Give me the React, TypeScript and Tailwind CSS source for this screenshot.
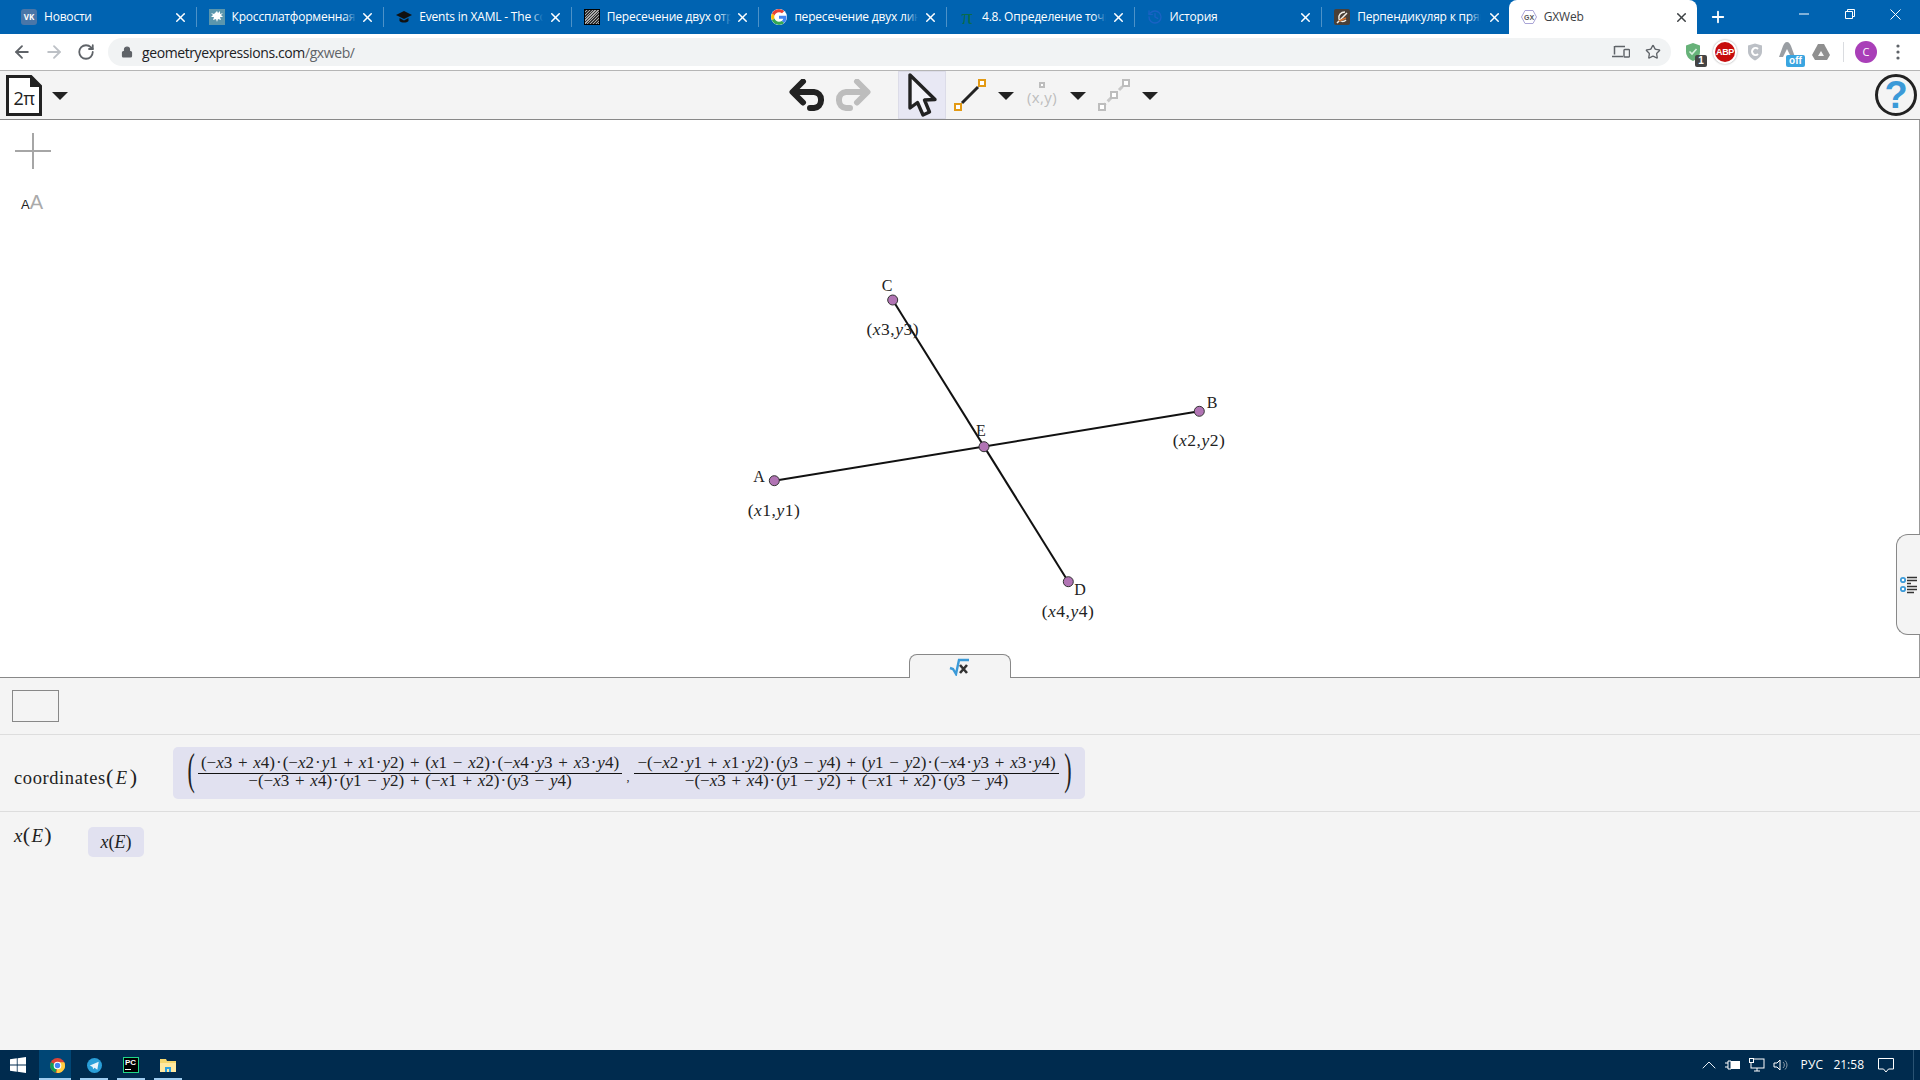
import React from 'react';
import { ArrowLeft, ArrowRight, RotateCw, Lock, Star, X, Plus, History, ChevronUp } from 'lucide-react';

const serif = "font-['Liberation_Serif',serif]";

const Expr: React.FC<{ s: string }> = ({ s }) => (
  <>
    {s.split(/([xyE·])/).map((part, i) => {
      if (part === '·') return <span key={i} className="mx-[1px]">·</span>;
      return /^[xyE]$/.test(part) ? <i key={i}>{part}</i> : <span key={i}>{part}</span>;
    })}
  </>
);

const Caret: React.FC<{ className?: string }> = ({ className }) => (
  <svg width="16" height="8" viewBox="0 0 16 8" className={`shrink-0 mt-[2px] ${className ?? ''}`}>
    <polygon points="0,0 16,0 8,8" fill="#222" />
  </svg>
);

const VkIcon = () => (
  <span className="w-4 h-4 rounded-[3px] bg-[#4a76a8] text-white text-[8px] font-bold flex items-center justify-center leading-none">
    VK
  </span>
);

const SplatIcon = () => (
  <svg width="16" height="16" viewBox="0 0 16 16">
    <rect width="16" height="16" fill="#5b96ad" />
    <path d="M8 2l1 2 2-2 0 3 3-1-2 2 2 2-3 0 1 3-3-1-1 3-1-3-3 1 1-3-3 0 2-2-2-2 3 1z" fill="#fff" />
  </svg>
);

const CapIcon = () => (
  <svg width="16" height="16" viewBox="0 0 16 16">
    <polygon points="0,6 8,2 16,6 8,10" fill="#111" />
    <path d="M3.5 9v3c2 2 7 2 9 0V9L8 11.5z" fill="#111" />
  </svg>
);

const HatchIcon = () => (
  <span className="w-4 h-4 border border-black bg-[repeating-linear-gradient(135deg,#333_0px,#333_1px,#aaa_1px,#aaa_2px)]" />
);

const GoogleIcon = () => (
  <svg width="16" height="16" viewBox="0 0 48 48" className="bg-white rounded-full">
    <path fill="#EA4335" d="M24 9.5c3.5 0 6.6 1.2 9.1 3.6l6.8-6.8C35.8 2.5 30.3 0 24 0 14.6 0 6.5 5.4 2.6 13.2l7.9 6.2C12.4 13.7 17.7 9.5 24 9.5z" />
    <path fill="#4285F4" d="M46.5 24.5c0-1.6-.1-3.100-.4-4.500H24v9h12.700c-.5 2.900-2.200 5.400-4.700 7l7.600 5.900c4.400-4.100 6.900-10.100 6.900-17.400z" />
    <path fill="#FBBC05" d="M10.500 28.600c-.5-1.400-.8-3-.8-4.600s.3-3.200.8-4.600l-7.900-6.200C.9 16.500 0 20.100 0 24s.9 7.500 2.600 10.800z" />
    <path fill="#34A853" d="M24 48c6.500 0 11.900-2.100 15.900-5.800L32.300 36.300c-2.100 1.400-4.900 2.300-8.300 2.300-6.300 0-11.600-4.200-13.500-9.900l-7.900 6.100C6.500 42.600 14.600 48 24 48z" />
  </svg>
);

const PiIcon = () => <span className={`${serif} text-[#0a6b4c] text-[22px] leading-4`}>π</span>;

const PerpIcon = () => (
  <svg width="16" height="16" viewBox="0 0 16 16">
    <rect width="16" height="16" rx="2" fill="#4a4038" />
    <path d="M11 3C7 3 4 6 5 10c1 3 5 3 7 1M3 14L13 4" stroke="#f3f0e8" strokeWidth="1.5" fill="none" />
    <path d="M5 12l7-3" stroke="#d9722a" strokeWidth="1.500" />
  </svg>
);

const GxIcon = () => (
  <svg width="16" height="16" viewBox="0 0 16 16">
    <polygon points="4,1.500 12,1.500 15.500,8 12,14.500 4,14.500 0.500,8" fill="none" stroke="#a9a4d6" strokeWidth="1" />
    <text x="8" y="10.500" textAnchor="middle" fontSize="7" fontWeight="700" fill="#555" fontFamily="Liberation Sans">GX</text>
  </svg>
);

const tabs: { title: string; icon: React.ReactNode }[] = [
  { title: 'Новости', icon: <VkIcon /> },
  { title: 'Кроссплатформенная разработка', icon: <SplatIcon /> },
  { title: 'Events in XAML - The complete', icon: <CapIcon /> },
  { title: 'Пересечение двух отрезков', icon: <HatchIcon /> },
  { title: 'пересечение двух линий', icon: <GoogleIcon /> },
  { title: '4.8. Определение точки', icon: <PiIcon /> },
  { title: 'История', icon: <History size={16} color="#1a62c4" strokeWidth={2} /> },
  { title: 'Перпендикуляр к прямой', icon: <PerpIcon /> },
];

const TabBar = () => (
  <div className="h-[34px] shrink-0 bg-[#0063b1] flex items-end pl-[9px] font-['Open_Sans','Noto_Sans',sans-serif] text-[12px]">
    {tabs.map((tab, i) => (
      <div
        key={tab.title}
        className={`relative w-[187.6px] h-[34px] shrink-0 flex items-center pl-3 pr-[8px] ${
          i < 7 ? 'border-r border-[#4d92c8]/70 [border-image:linear-gradient(transparent_8px,#4d92c8_8px,#4d92c8_26px,transparent_26px)_1]' : ''
        }`}
      >
        <span className="w-4 h-4 flex items-center justify-center shrink-0">{tab.icon}</span>
        <span className="relative ml-[7px] w-[124px] overflow-hidden whitespace-nowrap text-white tracking-[-0.2px]">
          {tab.title}
          <span className="absolute right-0 top-0 bottom-0 w-3 bg-gradient-to-r from-transparent to-[#0063b1]" />
        </span>
        <X size={15} color="#fff" strokeWidth={2.4} className="ml-auto" />
      </div>
    ))}
    <div className="w-[188px] h-[34px] shrink-0 bg-white rounded-t-lg flex items-center pl-3 pr-[8px] -ml-[1px]">
      <GxIcon />
      <span className="ml-[7px] text-[#3c4043] tracking-[-0.2px]">GXWeb</span>
      <X size={15} color="#3c4043" strokeWidth={2.4} className="ml-auto" />
    </div>
    <Plus size={18} color="#fff" strokeWidth={2.4} className="ml-[12px] mb-2" />
    <div className="ml-auto flex items-center h-[28px] self-start text-white">
      <svg width="10" height="10" viewBox="0 0 10 10" className="mr-[36px]">
        <path d="M0 5h10" stroke="#fff" strokeWidth="1" />
      </svg>
      <svg width="10" height="10" viewBox="0 0 10 10" className="mr-[35px]">
        <path d="M.5 2.500h7v7h-7zM2.500 2.500v-2h7v7h-2" stroke="#fff" strokeWidth="1" fill="none" />
      </svg>
      <svg width="11" height="11" viewBox="0 0 11 11" className="mr-[19px]">
        <path d="M.5.500l10 10M10.500.500l-10 10" stroke="#fff" strokeWidth="1" />
      </svg>
    </div>
  </div>
);

const NavBar = () => (
  <div className="h-[36px] shrink-0 bg-white flex items-center pl-3">
    <ArrowLeft size={20} color="#5f6368" strokeWidth={2.2} />
    <ArrowRight size={20} color="#bdc1c6" strokeWidth={2.2} className="ml-3" />
    <RotateCw size={18} color="#5f6368" strokeWidth={2.4} className="ml-[13px]" />
    <div className="ml-[13px] w-[1563px] h-[28px] rounded-full bg-[#f1f3f4] flex items-center pl-[13px]">
      <Lock size={12} color="#5f6368" fill="#5f6368" strokeWidth={2.4} />
      <span className="ml-[9px] text-[14px] font-['Open_Sans','Noto_Sans',sans-serif] tracking-[-0.4px] text-[#202124]">
        geometryexpressions.com<span className="text-[#5f6368]">/gxweb/</span>
      </span>
      <svg width="18" height="14" viewBox="0 0 18 14" className="ml-auto mr-[15px]">
        <path d="M3 1.500h10M2.500 1v8.500M0 11.500h11" stroke="#5f6368" strokeWidth="1.500" fill="none" />
        <rect x="12" y="4.500" width="5.500" height="7.500" rx=".8" stroke="#5f6368" strokeWidth="1.400" fill="none" />
      </svg>
      <Star size={16} color="#5f6368" strokeWidth={2} className="mr-[10px]" />
    </div>
    <div className="relative ml-[10px] w-6 h-6 flex items-center justify-center">
      <svg width="18" height="20" viewBox="0 0 18 20">
        <path d="M9 1l7 2.500v6c0 4.500-3 8-7 9.500-4-1.500-7-5-7-9.500v-6z" fill="#67b279" />
        <path d="M5.500 9.500l2.500 2.500 4.500-5" stroke="#d9f0df" strokeWidth="1.600" fill="none" />
      </svg>
      <span className="absolute right-[-2px] bottom-[-3px] w-[12px] h-[12px] bg-[#444] rounded-[2px] text-white text-[10px] font-bold font-['Liberation_Sans',sans-serif] flex items-center justify-center leading-none">
        1
      </span>
    </div>
    <div className="ml-[8px] w-6 h-6 rounded-full bg-white shadow-[0_0_2px_#999] flex items-center justify-center">
      <span className="w-[20px] h-[20px] rounded-full bg-[#c70d0d] text-white text-[9px] tracking-[-0.4px] font-bold font-['Liberation_Sans',sans-serif] flex items-center justify-center leading-none">
        ABP
      </span>
    </div>
    <svg width="20" height="20" viewBox="0 0 20 20" className="ml-[8px]">
      <path d="M10 1.500l7 2v6c0 4-3 7-7 9-4-2-7-5-7-9v-6z" fill="#bcc0c6" />
      <path d="M13 7a3.500 3.500 0 1 0 0 5" stroke="#fff" strokeWidth="2" fill="none" />
    </svg>
    <div className="relative ml-[13px] w-6 h-6 flex items-center justify-center">
      <svg width="18" height="20" viewBox="0 0 18 20" className="-translate-x-[3px] -translate-y-[1px]">
        <path d="M9 1C7 1 6 3 5 5L1 16h4L9 8l4 8h4L13 5c-1-2-2-4-4-4z" fill="#9a9ea3" />
      </svg>
      <span className="absolute right-[-3px] bottom-[-3px] w-[19px] justify-center h-[12px] bg-[#3aa5e0] rounded-[2px] text-white text-[10px] font-bold font-['Liberation_Sans',sans-serif] flex items-center leading-none">
        off
      </span>
    </div>
    <svg width="20" height="18" viewBox="0 0 20 18" className="ml-[9px]">
      <polygon points="7,1 13,1 19,12 16,17 4,17 1,12" fill="#8f8f8f" />
      <polygon points="10,8 13,13 7,13" fill="#f5f5f5" />
    </svg>
    <div className="ml-[12px] w-px h-[20px] bg-[#dadce0]" />
    <span className="ml-[11px] w-[22px] h-[22px] rounded-full bg-[#a93fb8] text-white text-[11px] font-['Open_Sans',sans-serif] flex items-center justify-center">
      C
    </span>
    <svg width="6" height="16" viewBox="0 0 6 16" className="ml-[18px]">
      <circle cx="3" cy="2" r="1.600" fill="#5f6368" />
      <circle cx="3" cy="8" r="1.600" fill="#5f6368" />
      <circle cx="3" cy="14" r="1.600" fill="#5f6368" />
    </svg>
  </div>
);

const Toolbar = () => (
  <div className="h-[50px] shrink-0 bg-[#f4f4f4] border-t border-t-[#b5b5b5] border-b border-b-[#888] flex items-center pl-[6px]">
    <div className="relative w-[36px] h-[41px] shrink-0">
      <svg width="36" height="41" viewBox="0 0 36 41" className="absolute inset-0">
        <path d="M1.500 1.500H25L34.500 11V39.500H1.500z" fill="#fff" stroke="#222" strokeWidth="3" />
        <path d="M24 1.500V12H34.500z" fill="#222" />
      </svg>
      <span className="relative flex justify-center pt-[11px] text-[18px] leading-6 text-[#222] font-['Open_Sans',sans-serif] tracking-[-0.5px]">2π</span>
    </div>
    <Caret className="ml-[10px]" />
    <svg width="35" height="32" viewBox="0 0 35 32" className="ml-[721px] shrink-0 -mt-[1px]">
      <path d="M14 2.500L3.500 13 14 23.500M4 13H25A7.500 7.500 0 0 1 32 20.500V21.500A7.500 7.500 0 0 1 25 29H21" fill="none" stroke="#222" strokeWidth="6" strokeLinecap="round" strokeLinejoin="round" />
    </svg>
    <svg width="35" height="32" viewBox="0 0 35 32" className="ml-[12px] shrink-0 -mt-[1px]">
      <path d="M21 2.500L31.500 13 21 23.500M31 13H10A7.500 7.500 0 0 0 3 20.500V21.500A7.500 7.500 0 0 0 10 29H14" fill="none" stroke="#bdbdbd" strokeWidth="6" strokeLinecap="round" strokeLinejoin="round" />
    </svg>
    <div className="ml-[27px] w-[48px] h-[48px] bg-[#e8e8f4] border border-[#dcdce8] shrink-0 flex items-center justify-center">
      <svg width="30" height="46" viewBox="0 0 30 46">
        <polygon points="3,3 3,36 10.500,30.500 16,43 22.500,40 17.500,28 28,27.500" fill="#f4f4fa" stroke="#222" strokeWidth="3.400" strokeLinejoin="round" />
      </svg>
    </div>
    <svg width="36" height="36" viewBox="0 0 36 36" className="ml-[6px] shrink-0">
      <path d="M10 26L26 10" stroke="#222" strokeWidth="3" />
      <rect x="3" y="27" width="6" height="6" fill="#fff" stroke="#e39a14" strokeWidth="2" />
      <rect x="27" y="3" width="6" height="6" fill="#fff" stroke="#e39a14" strokeWidth="2" />
    </svg>
    <Caret className="ml-[10px]" />
    <div className="ml-[10px] w-[36px] h-[36px] shrink-0 flex flex-col items-center">
      <span className="w-[6px] h-[6px] border-2 border-[#bdbdbd] mt-[5px] bg-white" />
      <span className="text-[15px] leading-[18px] tracking-[0.4px] whitespace-nowrap text-[#bdbdbd] font-['Open_Sans',sans-serif]">(x,y)</span>
    </div>
    <Caret className="ml-[10px]" />
    <svg width="36" height="36" viewBox="0 0 36 36" className="ml-[10px] shrink-0">
      <path d="M6 30L30 6" stroke="#c8c8c8" strokeWidth="3" strokeDasharray="5 3" />
      <rect x="3" y="27" width="6" height="6" fill="#fff" stroke="#bdbdbd" strokeWidth="2" />
      <rect x="15" y="15" width="6" height="6" fill="#fff" stroke="#bdbdbd" strokeWidth="2" />
      <rect x="27" y="3" width="6" height="6" fill="#fff" stroke="#bdbdbd" strokeWidth="2" />
    </svg>
    <Caret className="ml-[10px]" />
    <div className="ml-auto mr-[3px] w-[42px] h-[42px] rounded-full border-[3px] border-[#222] flex items-center justify-center text-[#3b9ad8] text-[38px] font-bold leading-none font-['Liberation_Sans',sans-serif]">
      ?
    </div>
  </div>
);

const Label: React.FC<{ x: number; y: number; children: React.ReactNode; big?: boolean }> = ({ x, y, children, big }) => (
  <span
    className={`absolute -translate-x-1/2 -translate-y-1/2 whitespace-nowrap text-[#222] leading-none ${serif} ${big ? 'text-[17.500px] tracking-[0.5px]' : 'text-[16px]'}`}
    style={{ left: x, top: y - 120 }}
  >
    {children}
  </span>
);

const points = [
  [774.3, 480.7],
  [1199.3, 411.3],
  [892.7, 300],
  [1068.3, 581.7],
  [984, 446.7],
];

const Canvas = () => (
  <div className="relative flex-1 bg-white border-r border-r-[#999]">
    <svg width="36" height="36" viewBox="0 0 36 36" className="ml-[15px] mt-[13px]">
      <path d="M18 0V36M0 18H36" stroke="#a6a6a6" strokeWidth="2" />
    </svg>
    <div className="ml-[21px] mt-[24px] flex items-end leading-none font-['Liberation_Sans',sans-serif]">
      <span className="text-[13px] text-[#222] leading-[13px]">A</span>
      <span className="text-[20px] text-[#aaa] leading-[18px]">A</span>
    </div>

    <svg className="absolute left-0 top-0 w-full h-full pointer-events-none" viewBox="0 120 1919 557" width="1919" height="557">
      <line x1="774.3" y1="480.7" x2="1199.3" y2="411.3" stroke="#111" strokeWidth="2" />
      <line x1="892.7" y1="300" x2="1068.3" y2="581.7" stroke="#111" strokeWidth="2" />
      {points.map(([cx, cy]) => (
        <circle key={cx} cx={cx} cy={cy} r="5" fill="#b174b4" stroke="#333" strokeWidth="1" />
      ))}
    </svg>

    <Label x={887} y={286}>C</Label>
    <Label x={759} y={477}>A</Label>
    <Label x={1212} y={403}>B</Label>
    <Label x={1080} y={590}>D</Label>
    <Label x={981} y={431}>E</Label>
    <Label x={892.7} y={330} big><Expr s="(x3,y3)" /></Label>
    <Label x={774} y={511} big><Expr s="(x1,y1)" /></Label>
    <Label x={1199} y={441} big><Expr s="(x2,y2)" /></Label>
    <Label x={1068} y={612} big><Expr s="(x4,y4)" /></Label>

    <div className="absolute left-[909px] bottom-[-1px] w-[102px] h-[24px] bg-[#f4f4f4] border border-[#888] border-b-0 rounded-t-lg flex items-center justify-center">
      <svg width="22" height="18" viewBox="0 0 22 18">
        <path d="M1 10l3 1 3 5 3-14h10" fill="none" stroke="#3b9ad8" strokeWidth="2.400" />
        <path d="M11 7l7 8M18 7l-7 8" stroke="#333" strokeWidth="2.600" />
      </svg>
    </div>

    <div className="absolute right-[-1px] top-[414px] w-[24px] h-[101px] bg-[#f4f4f4] border border-[#888] border-r-0 rounded-l-xl flex items-center justify-center">
      <svg width="18" height="18" viewBox="0 0 18 18">
        <circle cx="3" cy="4" r="2.200" fill="#fff" stroke="#3b9ad8" strokeWidth="1.800" />
        <circle cx="3" cy="13" r="2.200" fill="#fff" stroke="#3b9ad8" strokeWidth="1.800" />
        <path d="M7 1.500h10M7 4.500h10M7 7.500h4M7 10.500h10M7 13.500h10M7 16.500h7" stroke="#333" strokeWidth="1.300" />
      </svg>
    </div>
  </div>
);

const Fraction: React.FC<{ num: string; den: string; width: string }> = ({ num, den, width }) => (
  <span className={`inline-flex flex-col items-center shrink-0 ${width}`}>
    <span className="leading-[14px] h-[18px] border-b border-b-[#111] w-full text-center whitespace-nowrap">
      <Expr s={num} />
    </span>
    <span className="leading-[14px] h-[17px] whitespace-nowrap">
      <Expr s={den} />
    </span>
  </span>
);

const den = '−(−x3 + x4)·(y1 − y2) + (−x1 + x2)·(y3 − y4)';

const Panel = () => (
  <div className={`h-[373px] shrink-0 bg-[#f4f4f4] border-t border-t-[#888] flex flex-col ${serif} text-[#222]`}>
    <div className="h-[57px] shrink-0 border-b border-b-[#ddd] pl-3 pt-3">
      <div className="w-[47px] h-[32px] border border-[#888]" />
    </div>
    <div className="h-[77px] shrink-0 border-b border-b-[#ddd] flex items-center">
      <div className="w-[173px] pl-[14px] pt-[12px] text-[18.500px] tracking-[0.6px] shrink-0 whitespace-nowrap">
        coordinates<span className="text-[22px] leading-none">(</span><i className="mx-[2px]">E</i><span className="text-[22px] leading-none">)</span>
      </div>
      <div className="h-[52px] w-[912px] rounded-[5px] bg-[#e1e1f0] flex items-center pl-[11px] text-[17px] [word-spacing:1.5px]">
        <span className="text-[44px] leading-none font-light scale-x-50 -translate-y-[3px] w-[14px] text-center">(</span>
        <Fraction
          width="w-[424px]"
          num="(−x3 + x4)·(−x2·y1 + x1·y2) + (x1 − x2)·(−x4·y3 + x3·y4)"
          den={den}
        />
        <span className="w-[12px] text-center text-[12px] pt-2">,</span>
        <Fraction
          width="w-[425px]"
          num="−(−x2·y1 + x1·y2)·(y3 − y4) + (y1 − y2)·(−x4·y3 + x3·y4)"
          den={den}
        />
        <span className="text-[44px] leading-none font-light scale-x-50 -translate-y-[3px] w-[18px] text-center">)</span>
      </div>
    </div>
    <div className="flex pt-[15px]">
      <div className="w-[88px] pl-[14px] -mt-[3px] text-[19px] leading-[22px] tracking-[0.3px] whitespace-nowrap">
        <Expr s="x" /><span className="text-[22px] leading-none">(</span><i className="mx-[1px]">E</i><span className="text-[22px] leading-none">)</span>
      </div>
      <div className="w-[56px] h-[30px] rounded-[5px] bg-[#e1e1f0] flex items-center justify-center text-[18px]">
        <Expr s="x(E)" />
      </div>
    </div>
  </div>
);

const TaskIcon: React.FC<{ active?: boolean; children: React.ReactNode }> = ({ active, children }) => (
  <div className={`relative h-[30px] flex items-center justify-center shrink-0 ${active ? 'w-[32px] pl-[4px] bg-[#004675]' : 'w-[28px]'}`}>
    {children}
    <span className="absolute left-0 right-0 bottom-0 h-[2px] bg-[#9fcdf0]" />
  </div>
);

const Taskbar = () => (
  <div className="h-[30px] shrink-0 bg-[#002b4e] flex items-center">
    <svg width="16" height="16" viewBox="0 0 16 16" className="ml-[10px] shrink-0">
      <path d="M0 2.300L6.800 1.300V7.600H0zM7.600 1.200L16 0V7.600H7.600zM0 8.400H6.800V14.700L0 13.700zM7.600 8.400H16V16L7.600 14.800z" fill="#fff" />
    </svg>
    <div className="ml-[13px] flex gap-[9px]">
      <TaskIcon active>
        <svg width="15" height="15" viewBox="0 0 16 16">
          <circle cx="8" cy="8" r="8" fill="#db4437" />
          <path d="M8 8L1 4.500A8 8 0 0 0 6 15.800z" fill="#0f9d58" />
          <path d="M8 4.500H15.200A8 8 0 0 1 7 16z" fill="#ffcd40" />
          <circle cx="8" cy="8" r="3.500" fill="#4285f4" stroke="#fff" strokeWidth="1.200" />
        </svg>
      </TaskIcon>
      <TaskIcon>
        <svg width="15" height="15" viewBox="0 0 16 16">
          <circle cx="8" cy="8" r="8" fill="#2a9fd8" />
          <path d="M3 8l9.500-4-1.500 8.500-3-2-1.500 1.500-.5-2.500z" fill="#e8f4fb" />
        </svg>
      </TaskIcon>
      <TaskIcon>
        <span className="w-4 h-4 bg-black border border-[#21d789] flex flex-col pl-[1px] text-white text-[8px] font-bold leading-[10px] font-['Liberation_Sans',sans-serif]">
          PC
          <span className="w-[6px] h-px bg-white mt-[1px]" />
        </span>
      </TaskIcon>
      <TaskIcon>
        <svg width="16" height="14" viewBox="0 0 16 14">
          <path d="M0 1h6l1 2h9v11H0z" fill="#f5d76e" />
          <path d="M0 5h16v9H0z" fill="#ffe9a0" />
          <path d="M5 14V9h6v5h-2v-3H7v3z" fill="#2ba0e0" />
        </svg>
      </TaskIcon>
    </div>
    <div className="ml-auto flex items-center text-white text-[12px] font-['Open_Sans','Noto_Sans',sans-serif]">
      <ChevronUp size={24} color="#e6edf3" strokeWidth={1} className="-mr-[4px]" />
      <svg width="16" height="12" viewBox="0 0 16 12" className="ml-[8px]">
        <path d="M0 4h3M0 8h3M3 2h3v8H3zM6 6h2" stroke="#fff" fill="none" />
        <rect x="6" y="2" width="9" height="8" fill="#fff" />
      </svg>
      <svg width="16" height="14" viewBox="0 0 16 14" className="ml-[8px]">
        <rect x="2" y="1" width="13" height="9" fill="none" stroke="#fff" />
        <path d="M8 10v3M5 13h6" stroke="#fff" />
        <rect x="0.500" y="0.500" width="4" height="4" fill="#002b4e" stroke="#fff" />
      </svg>
      <svg width="16" height="14" viewBox="0 0 16 14" className="ml-[8px]">
        <path d="M1 5h3l3-3v10L4 9H1z" fill="none" stroke="#fff" />
        <path d="M10 4a4 4 0 0 1 0 6M12 2.500a6 6 0 0 1 0 9" fill="none" stroke="#8a9aa8" />
      </svg>
      <span className="ml-[12px] tracking-[0.2px]">РУС</span>
      <span className="ml-[10px]">21:58</span>
      <svg width="16" height="15" viewBox="0 0 16 15" className="ml-[14px]">
        <path d="M.5.500h15v10.500h-5l-2.500 3-2.500-3h-5z" fill="none" stroke="#fff" />
      </svg>
      <div className="ml-[19px] mr-[6px] w-px h-[30px] bg-[#2a5373]" />
    </div>
  </div>
);

export default function App() {
  return (
    <div className="w-[1920px] h-[1080px] flex flex-col overflow-hidden">
      <TabBar />
      <NavBar />
      <Toolbar />
      <Canvas />
      <Panel />
      <Taskbar />
    </div>
  );
}
